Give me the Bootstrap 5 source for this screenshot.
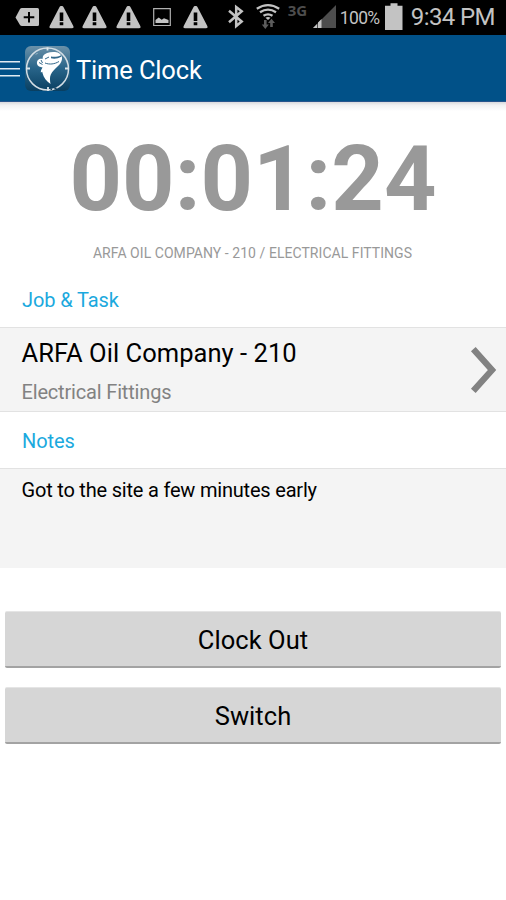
<!DOCTYPE html>
<html lang="en">
<head>
<meta charset="utf-8">
<meta name="viewport" content="width=device-width, initial-scale=1">
<title>Time Clock</title>
<link href="https://cdn.jsdelivr.net/npm/bootstrap@5.3.0/dist/css/bootstrap.min.css" rel="stylesheet">
<style>
body{font-family:Roboto,"Liberation Sans",sans-serif;color:#000;background:#fff;height:900px;overflow:hidden}
svg{display:block;flex:none}
.statusbar{height:35px;background:#000;color:#c3c3c3;white-space:nowrap}
.statusbar>*{flex:none}
.ic-add{margin-left:15px}
.ic-warn{margin:6px 0 0 8.6px}
.ic-pic{margin-left:12px}
.ic-pic+.ic-warn{margin-left:12px}
.ic-bt{margin-left:20px}
.ic-wifi{margin-left:12px}
.net{font-family:"Open Sans",Roboto,sans-serif;font-size:15px;font-weight:700;color:#4d4d4d;width:25px;line-height:21px}
.pct{font-size:17.5px;width:45px;line-height:36px;padding-left:4px;letter-spacing:-.65px}
.clock{font-size:24px;line-height:35px;letter-spacing:-.6px;padding-left:8px}
.appbar{height:67px;background:#015188;color:#fff;border-bottom:1px solid #27548c}
.appbar h1{font-size:25.5px;line-height:30px;letter-spacing:-.15px;padding:3px 0 0 6px}
.logo{margin-left:5px}
.shade{height:9px;background:linear-gradient(#d9d9dc,#f1f1f2 35%,#fff)}
.timer{font-size:91.6px;font-weight:700;line-height:100px;color:#999;margin-top:18px}
.summary{font-size:14px;line-height:20px;color:#999;margin-top:14px;letter-spacing:.05px;padding-right:1px}
.label-row{font-size:20px;line-height:24px;color:#1ba9de;padding-left:22px;letter-spacing:-.1px}
.label-job{padding-top:25px;padding-bottom:15px}
.label-notes{padding-top:17px;padding-bottom:15px}
.panel{background:#f4f4f4;border-top:1px solid #e2e2e2;padding-left:21.5px}
.job{height:85px;border-bottom:1px solid #e2e2e2;padding-right:9px}
.job-name{font-size:25.5px;line-height:30px;letter-spacing:.05px;padding-top:3px}
.job-task{font-size:20px;line-height:24px;color:#828282;letter-spacing:-.17px;margin-top:12px}
.notes{height:100px;font-size:20px;line-height:24px;padding-top:9px;letter-spacing:-.2px}
.actions{gap:19px;padding:43px 5px 0}
.btn-flat{height:57px;background:#d6d6d6;color:#000;border:0;border-radius:2px;border-top:1px solid #e5e5e5;border-bottom:2px solid #a3a3a3;font-size:25.5px;line-height:30px;letter-spacing:.05px}
.btn-flat span{display:block;padding-top:2px}
</style>
</head>
<body>
<svg width="0" height="0" class="position-absolute">
  <symbol id="warn" viewBox="0 0 25 23"><path fill="#c3c3c3" d="M12.500 0c1 0 1.700.4 2.200 1.400L24.300 20c.6 1.300.2 2.300-1.300 2.300H2C.5 22.300.1 21.300.7 20L10.300 1.400C10.800.4 11.500 0 12.500 0z"/><path fill="#000" d="M10.700 6.500h3.600v8.500h-3.600zm0 9.800h3.600v3h-3.600z"/></symbol>
</svg>
<div class="statusbar d-flex align-items-start">
  <svg class="ic-add" width="25" height="35" viewBox="0 0 25 35"><path fill="#c3c3c3" d="M7 8h15.500q1.500 0 1.500 1.500v15q0 1.500-1.500 1.500H7Q5.700 26 5 25L.5 17.500 5 9q.7-1 2-1z"/><path stroke="#000" stroke-width="2" d="M14 12v10.500M8.700 17.200h10.600"/></svg>
  <svg class="ic-warn" width="25" height="23"><use href="#warn"/></svg>
  <svg class="ic-warn" width="25" height="23"><use href="#warn"/></svg>
  <svg class="ic-warn" width="25" height="23"><use href="#warn"/></svg>
  <svg class="ic-pic" width="18" height="35" viewBox="0 0 18 35"><path fill="none" stroke="#b0b0b0" stroke-width="1.200" d="M.7 8.700h16.600v16.800H.7z"/><path fill="#c3c3c3" d="M2.500 23v-3l3.200-2.500 3 2.200 2.300-1.500 4.500 1.800v3z"/></svg>
  <svg class="ic-warn" width="25" height="23"><use href="#warn"/></svg>
  <svg class="ic-bt" width="16" height="35" viewBox="0 0 16 35"><path fill="none" stroke="#c3c3c3" stroke-width="2.500" d="M1 10.700L13.700 21.500 8.200 26V7l5.500 4.200L1 22.300"/></svg>
  <svg class="ic-wifi" width="24" height="35" viewBox="0 0 24 35"><g fill="none" stroke="#c3c3c3" stroke-width="2.300"><path d="M.8 8.700Q12 1.500 23.200 8.700M4 12.300q8-5.300 16 0M7.500 15.800q4.500-3 9 0"/></g><path fill="#c3c3c3" d="M9.500 17.700q2.500-1.300 5 0L12 20z"/><path fill="#5c5c5c" d="M8 20h2.600v4.500h2.200L9.300 29l-3.500-4.500H8zM14.200 27v-4h-2.200l3.500-4.300 3.500 4.300h-2.200v4z"/></svg>
  <span class="net ms-2">3G</span>
  <svg width="23" height="35" viewBox="0 0 23 35"><path fill="#4d4d4d" d="M23 5v23H0z"/><path fill="#c3c3c3" d="M0 28l4-4v4zM5 28v-5.500l3.500-3.500V28z"/></svg>
  <span class="pct">100%</span>
  <svg class="ms-1" width="18" height="35" viewBox="0 0 18 35"><path fill="#c3c3c3" d="M5.500 3.300h7v2.400H17.500V30H0V5.700h5.500z"/></svg>
  <span class="clock">9:34 PM</span>
</div>
<header class="appbar d-flex align-items-center">
  <svg width="20" height="17" viewBox="0 0 20 17"><path stroke="#e1ebf2" stroke-width="1.500" d="M0 1.800h20M0 8.800h20M0 15.800h20"/></svg>
  <svg class="logo" width="45" height="45" viewBox="0 0 45 45">
    <defs><linearGradient id="tile" x2="0" y2="1"><stop stop-color="#6b91a9"/><stop offset=".5" stop-color="#286489"/><stop offset="1" stop-color="#093f61"/></linearGradient></defs>
    <rect width="45" height="45" rx="6" fill="url(#tile)"/>
    <circle cx="22.500" cy="23" r="21" fill="none" stroke="#d3dde4" stroke-width="1.500"/>
    <path stroke="#dce5eb" stroke-width="1.800" d="M22.500 1.500v3M23 41v4M1.500 22.500h3.500M40 22.500h3.500"/>
    <path fill="none" stroke="#123f5c" stroke-width="1.500" d="M29.500 43l2-1M25.500 43.500l1.500-.3"/>
    <path fill="#fff" d="M18 10c2-3 7-4.500 12-4 4 .4 6.500 2.500 7 5.500.3 4-2 7-5 9.500-2.500 2.200-4.500 4.500-6.200 7.500-1.300 2.800-.8 6-.3 9.500-4-2.500-7-6.500-8-11-.3-1.800-.5-3.500 0-5.500l-3.500-1c-2.200-1.500-2.800-4.500-1-6.500 1.200-1.300 3-1.700 4.500-1z"/>
    <path fill="#fff" d="M19 21c-2.200 1-3.300 3-3.200 5.500 1.500-1 3-1.300 4.500-1z"/>
    <path fill="#34698b" d="M26 10.500c3 .7 7 .3 10-1.200l.3 1.500c-3.200 1.800-7.300 2.300-10.300 1.400z"/>
    <path fill="none" stroke="#34698b" stroke-width="1" d="M20 17c4.500 1.800 9.500 1.200 14-1.500M14 16.500l3.500 2M16 14l1.500 3M20 13l4-2"/>
    <path fill="none" stroke="#c3d3dd" stroke-width=".8" d="M11 8.500l1.500-1.500"/>
  </svg>
  <h1 class="mb-0 fw-normal">Time Clock</h1>
</header>
<div class="shade"></div>
<main>
  <div class="timer text-center">00:01:24</div>
  <div class="summary text-center">ARFA OIL COMPANY - 210 / ELECTRICAL FITTINGS</div>
  <div class="label-row label-job">Job &amp; Task</div>
  <div class="panel job d-flex align-items-center justify-content-between">
    <div>
      <div class="job-name">ARFA Oil Company - 210</div>
      <div class="job-task">Electrical Fittings</div>
    </div>
    <svg width="27" height="46" viewBox="0 0 27 46"><path fill="none" stroke="#828282" stroke-width="6.300" d="M3.300 2.200L22 23 3.300 43.800"/></svg>
  </div>
  <div class="label-row label-notes">Notes</div>
  <div class="panel notes">Got to the site a few minutes early</div>
  <div class="d-grid actions">
    <button class="btn btn-flat p-0" type="button"><span>Clock Out</span></button>
    <button class="btn btn-flat p-0" type="button"><span>Switch</span></button>
  </div>
</main>
<script src="https://cdn.jsdelivr.net/npm/bootstrap@5.3.0/dist/js/bootstrap.bundle.min.js"></script>
</body>
</html>
